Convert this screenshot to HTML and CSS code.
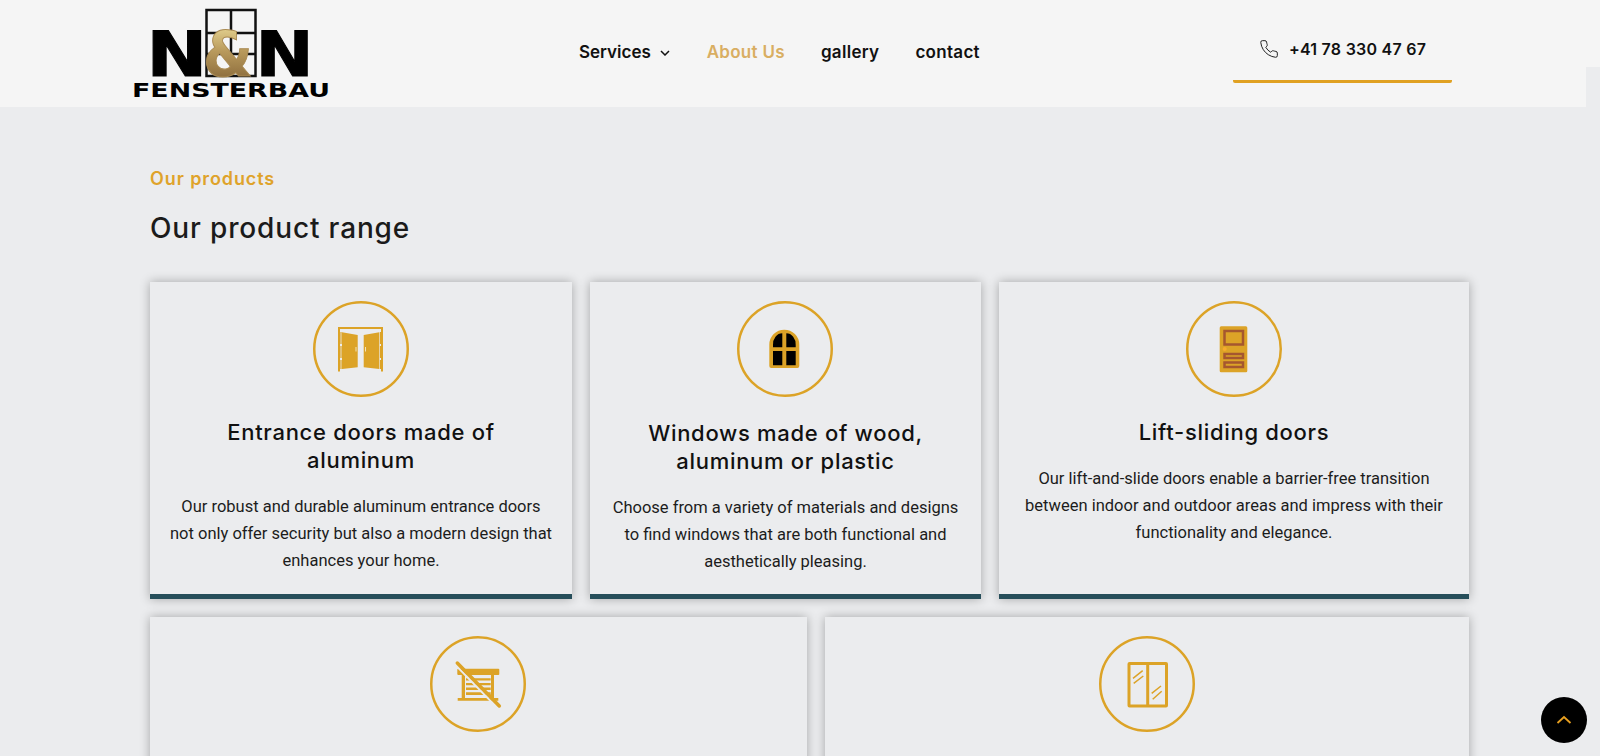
FILE: index.html

```html
<!DOCTYPE html>
<html lang="en">
<head>
  <meta charset="UTF-8">
  <meta name="viewport" content="width=device-width, initial-scale=1.0">
  <title>N&amp;N Fensterbau - Our products</title>
  <link rel="stylesheet" href="styles.css">
</head>
<body>

  <header class="site-header">
    <a class="logo" href="#">
      <svg width="204" height="104" viewBox="0 0 204 104">
        <defs>
          <linearGradient id="goldFade" x1="0" y1="0" x2="0" y2="1">
            <stop offset="0" stop-color="#f1e3a0"/>
            <stop offset="0.45" stop-color="#b99a5c"/>
            <stop offset="1" stop-color="#7a5a30"/>
          </linearGradient>
        </defs>
        <g class="logo-frame">
          <rect x="73.500" y="10" width="49" height="66"/>
          <path d="M98 10V76M73.500 33H122.500M73.500 54H122.500"/>
        </g>
        <text class="logo-n" transform="translate(13.500 76) scale(1.170 1)">N</text>
        <text class="logo-n logo-amp" transform="translate(70 76) scale(0.920 1)" fill="url(#goldFade)">&amp;</text>
        <text class="logo-n" transform="translate(122.500 76) scale(1.120 1)">N</text>
        <text class="logo-sub" x="-1" y="97" textLength="198" lengthAdjust="spacingAndGlyphs">FENSTERBAU</text>
      </svg>
    </a>

    <nav class="main-nav">
      <a class="has-caret" href="#">Services
        <svg class="caret" width="10" height="6" viewBox="0 0 10 6"><path d="M1 1l4 4 4-4"/></svg>
      </a>
      <a class="current" href="#">About Us</a>
      <a href="#">gallery</a>
      <a href="#">contact</a>
    </nav>

    <a class="phone" href="#">
      <svg width="20" height="20" viewBox="0 0 24 24"><path d="M22 16.92v3a2 2 0 0 1-2.18 2 19.79 19.79 0 0 1-8.63-3.07 19.5 19.5 0 0 1-6-6 19.79 19.79 0 0 1-3.07-8.67A2 2 0 0 1 4.11 2h3a2 2 0 0 1 2 1.72 12.84 12.84 0 0 0 .7 2.81 2 2 0 0 1-.45 2.11L8.09 9.91a16 16 0 0 0 6 6l1.27-1.27a2 2 0 0 1 2.11-.45 12.84 12.84 0 0 0 2.81.7A2 2 0 0 1 22 16.92z"/></svg>
      +41 78 330 47 67
    </a>
  </header>

  <main class="products">
    <p class="eyebrow">Our products</p>
    <h1>Our product range</h1>

    <div class="row">
      <article class="card card-door">
        <svg class="icon" viewBox="0 0 96 96">
          <circle class="ring" cx="48" cy="48" r="46.750"/>
          <path class="fill" d="M25 26H70V70.500H68V28H27V70.500H25Z"/>
          <path class="dash" d="M28 31V68M67.500 31V68"/>
          <path class="fill" d="M29 31.300L44.700 34V66.300L29 68ZM66.300 31.300L50.700 34V66.300L66.300 68Z"/>
          <path class="knob" d="M43 46V50.500M52.500 46V50.500"/>
        </svg>
        <h2>Entrance doors made of aluminum</h2>
        <p>Our robust and durable aluminum entrance doors not only offer security but also a modern design that enhances your home.</p>
      </article>

      <article class="card card-window">
        <svg class="icon" viewBox="0 0 96 96">
          <circle class="ring" cx="48" cy="48" r="46.750"/>
          <path class="fill" d="M32.300 43.700a15 15 0 0 1 30 0V65a2 2 0 0 1-2 2H34.300a2 2 0 0 1-2-2Z"/>
          <path d="M36 46.300V44a9.300 11 0 0 1 9.300-11.700V46.300ZM49.300 46.300V32.300A9.400 11 0 0 1 58.700 44V46.300ZM36 50H45.300V64.300H36ZM49.300 50H58.700V64.300H49.300Z"/>
        </svg>
        <h2>Windows made of wood, aluminum or plastic</h2>
        <p>Choose from a variety of materials and designs to find windows that are both functional and aesthetically pleasing.</p>
      </article>

      <article class="card card-lift">
        <svg class="icon" viewBox="0 0 96 96">
          <circle class="ring" cx="48" cy="48" r="46.750"/>
          <rect class="fill" x="33.700" y="25.300" width="27.600" height="46" rx="1.500"/>
          <rect class="panel" x="38.500" y="30" width="18.500" height="13.500"/>
          <rect class="panel" x="38.500" y="53" width="18.500" height="4"/>
          <rect class="panel" x="38.500" y="61.500" width="18.500" height="4.500"/>
          <circle class="handle" cx="38.700" cy="48" r="2"/>
        </svg>
        <h2>Lift-sliding doors</h2>
        <p>Our lift-and-slide doors enable a barrier-free transition between indoor and outdoor areas and impress with their functionality and elegance.</p>
      </article>
    </div>

    <div class="row">
      <article class="card card-shutter">
        <svg class="icon" viewBox="0 0 96 96">
          <circle class="ring" cx="48" cy="48" r="46.750"/>
          <rect class="fill" x="27.300" y="32.700" width="42" height="6.300" rx="1"/>
          <path class="fill" d="M31.700 39H35V62H61V39H64V62H68.300V64.700H27.700V62H31.700Z"/>
          <path class="fill" d="M36 42.300H60.700V44.500H36ZM36 47H60.700V49.300H36ZM36 51.500H60.700V54H36ZM36 56.300H60.700V59H36Z"/>
          <path class="halo" d="M26 29.500L67 71.500"/>
          <path class="slash" d="M27.300 27L69.300 70"/>
        </svg>
      </article>

      <article class="card card-slide">
        <svg class="icon" viewBox="0 0 96 96">
          <circle class="ring" cx="48" cy="48" r="46.750"/>
          <rect class="line" x="30" y="27.500" width="37.500" height="42.500" rx="0.500"/>
          <path class="line" d="M48.700 27V70"/>
          <path class="glass" d="M34 42.300L43.700 34.700M34.700 47.300L44.300 40M52.700 57.300L62 50M53.700 63.300L62.700 55.300"/>
        </svg>
      </article>
    </div>
  </main>

  <a class="to-top" href="#">
    <svg width="16" height="10" viewBox="0 0 16 10"><path d="M1.500 8L8 2l6.500 6"/></svg>
  </a>

</body>
</html>
```

FILE: styles.css

```css
body {
  margin: 0;
  height: 756px;
  overflow: hidden;
  background: #ebecee;
  color: #111;
  font-family: Roboto, Arial, sans-serif;
}
a {
  color: inherit;
  text-decoration: none;
}

/* header: the strip is full width only for its top part */
.site-header {
  display: flex;
  height: 107px;
  padding-left: 133px;
  background:
    linear-gradient(#f5f5f5, #f5f5f5) 0 0 / 100% 67px no-repeat,
    linear-gradient(#f5f5f5, #f5f5f5) 0 0 / 1586px 100% no-repeat;
}
.logo {
  display: block;
  flex: none;
  height: 104px;
}
.logo-frame rect,
.logo-frame path {
  fill: none;
  stroke: #111;
  stroke-width: 2.500px;
}
.logo-n {
  font: bold 62px "DejaVu Sans", sans-serif;
  fill: #000;
  stroke: #000;
  stroke-width: 1px;
}
.logo-amp {
  fill: url(#goldFade);
  stroke: #a98a52;
}
.logo-sub {
  font: bold 20px "DejaVu Sans", sans-serif;
}
.main-nav {
  display: flex;
  align-items: center;
  gap: 36px;
  margin-left: 242px;
  height: 103px;
  font: 600 17px Inter, Arial, sans-serif;
  letter-spacing: 0.3px;
}
.main-nav .current {
  color: #d9ae62;
}
.main-nav .has-caret {
  letter-spacing: 0;
}
.caret {
  margin: 0 1px 0 4.500px;
  vertical-align: 2px;
}
.caret path {
  fill: none;
  stroke: #111;
  stroke-width: 1.5px;
}
.phone {
  display: flex;
  align-items: center;
  gap: 10px;
  flex: none;
  width: 219px;
  height: 83px;
  margin: 0 0 0 253px;
  padding: 18px 0 0 26px;
  box-sizing: border-box;
  border-bottom: 3px solid #e0a122;
  border-radius: 2px;
  font: 600 16px Inter, Arial, sans-serif;
  letter-spacing: 0.25px;
}
.phone svg {
  fill: none;
  stroke: #222;
  stroke-width: 1.200px;
}

/* products */
.products {
  padding: 61px 130px 0 150px;
}
.eyebrow {
  margin: 0;
  font: 600 18px/22px Inter, Arial, sans-serif;
  letter-spacing: 0.9px;
  color: #dfa32a;
}
h1 {
  margin: 20px 0 36px;
  font: 500 28px/36px Inter, Arial, sans-serif;
  letter-spacing: 0.85px;
  color: #1b1b1b;
}
.row {
  display: flex;
  gap: 18px;
  margin-bottom: 18px;
}
.card {
  flex: none;
  box-sizing: border-box;
  height: 317px;
  padding: 19px 18px 0;
  text-align: center;
  background: #ebecee;
  border-bottom: 5px solid #264e5a;
  box-shadow: 0 0 10px rgba(0, 0, 0, 0.3);
}
.card-door { width: 422px; }
.card-window { width: 391px; }
.card-lift { width: 470px; padding-left: 24px; padding-right: 24px; }
.card-shutter { width: 657px; }
.card-slide { width: 644px; }
.card h2 {
  margin: 21px 0 19px;
  font: 500 22px/28px Inter, Arial, sans-serif;
  letter-spacing: 0.7px;
  color: #111;
}
.card-door h2 { padding: 0 30px; }
.card-window h2 { margin-top: 22px; }
.card p {
  margin: 0;
  font-size: 16.500px;
  line-height: 27px;
  color: #1c1c1c;
}

/* icons */
.icon {
  display: block;
  width: 96px;
  height: 96px;
  margin: 0 auto;
}
.card-door .icon,
.card-window .icon,
.card-shutter .icon {
  padding-right: 1px;
}
.ring {
  fill: none;
  stroke: #dca327;
  stroke-width: 2.500px;
}
.fill { fill: #dca327; }
.dash {
  fill: none;
  stroke: #dca327;
  stroke-width: 1.200px;
  stroke-dasharray: 12 2;
}
.knob {
  fill: none;
  stroke: #f3e3b8;
  stroke-width: 1px;
}
.panel {
  fill: none;
  stroke: #a5572f;
  stroke-width: 2.500px;
}
.handle { fill: #f7ab2e; }
.halo {
  fill: none;
  stroke: #ebecee;
  stroke-width: 2px;
}
.slash {
  fill: none;
  stroke: #dca327;
  stroke-width: 3.500px;
  stroke-linecap: round;
}
.line {
  fill: none;
  stroke: #dca327;
  stroke-width: 3px;
}
.glass {
  fill: none;
  stroke: #dca327;
  stroke-width: 1.500px;
}

.to-top {
  position: fixed;
  left: 1541px;
  top: 697px;
  display: flex;
  align-items: center;
  justify-content: center;
  width: 46px;
  height: 46px;
  border-radius: 50%;
  background: #000;
}
.to-top svg {
  fill: none;
  stroke: #e8a020;
  stroke-width: 1.800px;
}
```
